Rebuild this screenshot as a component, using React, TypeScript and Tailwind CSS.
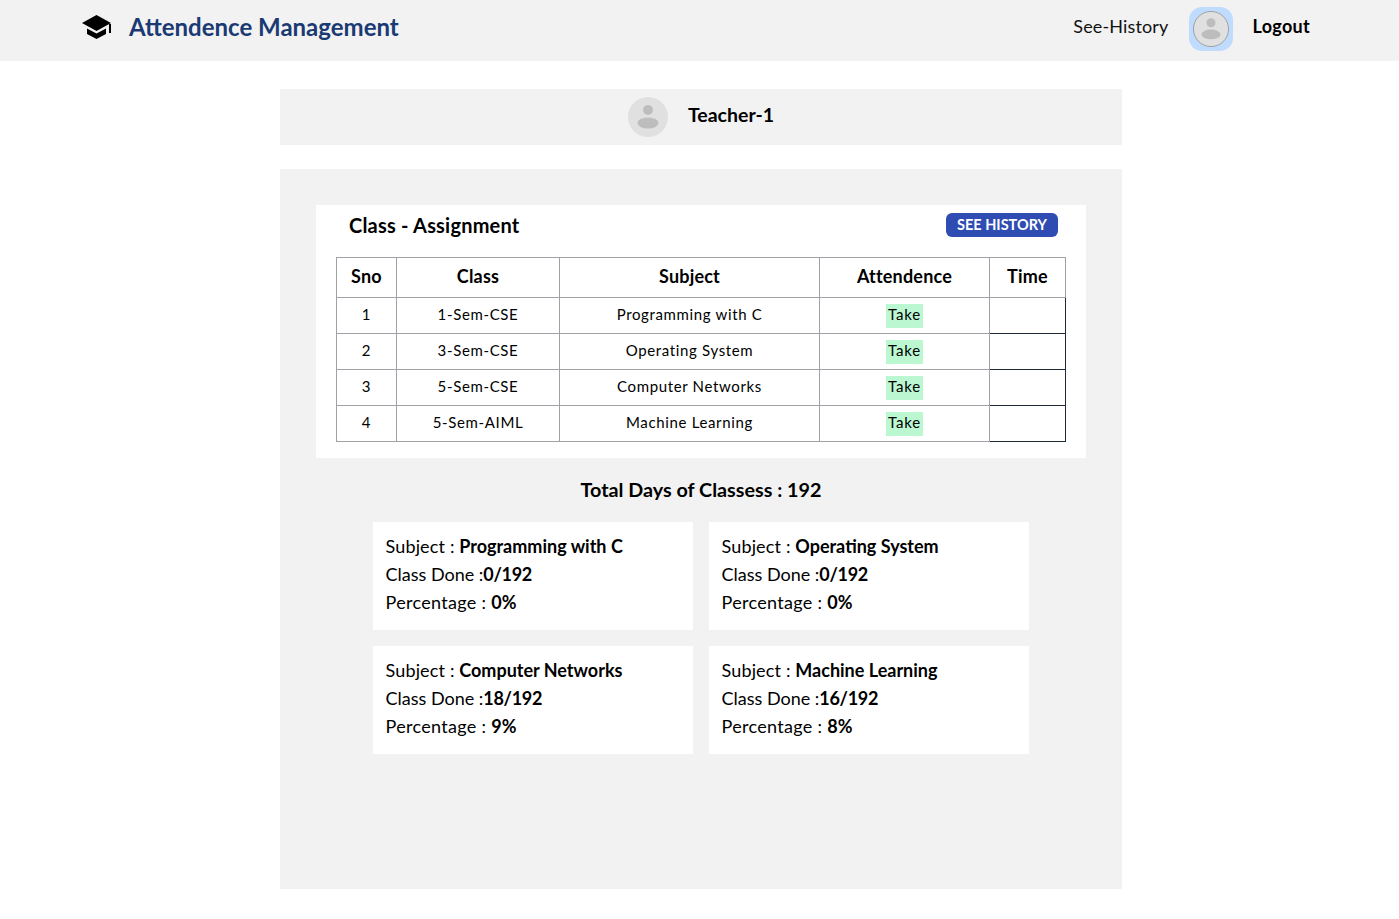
// attendance dashboard for a teacher

import React from "react";

const font = "font-['Lato','Noto_Sans',sans-serif]";

const rows = [
    { sno: 1, cls: "1-Sem-CSE", subject: "Programming with C" },
    { sno: 2, cls: "3-Sem-CSE", subject: "Operating System" },
    { sno: 3, cls: "5-Sem-CSE", subject: "Computer Networks" },
    { sno: 4, cls: "5-Sem-AIML", subject: "Machine Learning" },
];

const stats = [
    { subject: "Programming with C", done: "0/192", pct: "0%" },
    { subject: "Operating System", done: "0/192", pct: "0%" },
    { subject: "Computer Networks", done: "18/192", pct: "9%" },
    { subject: "Machine Learning", done: "16/192", pct: "8%" },
];

const Avatar = ({ size, ring }: { size: number; ring?: boolean }) => (
    <svg width={size} height={size} viewBox="0 0 40 40">
        <circle cx="20" cy="20" r={ring ? 19.5 : 20} fill="#e0e0e0" stroke={ring ? "#9a9a9a" : "none"} />
        <circle cx="20" cy="13" r="5" fill="#bdbdbd" />
        <ellipse cx="20" cy="26" rx="10.5" ry="5.5" fill="#bdbdbd" />
    </svg>
);

const Cap = () => (
    <svg width="30" height="26" viewBox="0 0 30 26" className="mb-[3px]">
        <path d="M14.5 1 L29 9 L14.5 17 L0 9 Z" fill="#000" />
        <path d="M5 14.5 L14.5 19.5 L24 14.5 L24 20 L14.5 25 L5 20 Z" fill="#000" />
        <rect x="27" y="10" width="2" height="9" fill="#000" />
    </svg>
);

const App = () => {
    return (
        <div className={`min-h-[919px] bg-white text-black ${font}`}>
            {/* top navigation */}
            <nav className="h-[61px] bg-[#f2f2f2] flex items-center pb-[4px] pl-[82px] pr-[89px]">
                <Cap />
                <h1 className="ml-[17px] mb-[4px] text-[24px] font-bold tracking-[0px] text-[#1a3a73]">Attendence Management</h1>
                <div className="ml-auto flex items-center">
                    <span className="mb-[4px] text-[18px] tracking-[0.15px] text-[#111]">See-History</span>
                    <div className="ml-[20px] w-[44px] h-[44px] rounded-[13px] bg-[#bfdbfe] flex items-center justify-center">
                        <Avatar size={36} ring />
                    </div>
                    <span className="ml-[20px] mb-[4px] text-[18px] font-bold tracking-[0.3px]">Logout</span>
                </div>
            </nav>

            <div className="w-[842px] ml-[280px] pt-[28px]">
                {/* teacher banner */}
                <div className="h-[56px] bg-[#f2f2f2] flex items-center justify-center gap-[20px]">
                    <Avatar size={40} />
                    <span className="pb-[4px] text-[19.5px] font-bold">Teacher-1</span>
                </div>

                <main className="mt-[24px] h-[720px] bg-[#f2f2f2] p-[36px]">
                    {/* assignment table */}
                    <section className="h-[253px] bg-white px-[20px]">
                        <div className="h-[52px] flex items-start justify-between pl-[13px] pr-[8px]">
                            <h2 className="mt-[5px] text-[20px] font-bold tracking-[0.2px]">Class - Assignment</h2>
                            <button className="mt-[8px] h-[24px] w-[112px] rounded-[6px] bg-[#2f4cb3] text-white text-[14.5px] font-bold">SEE HISTORY</button>
                        </div>
                        <table className="w-[729px] table-fixed border-collapse text-[15px]">
                            <colgroup>
                                <col className="w-[60px]" />
                                <col className="w-[163px]" />
                                <col className="w-[260px]" />
                                <col className="w-[170px]" />
                                <col className="w-[76px]" />
                            </colgroup>
                            <thead>
                                <tr className="h-[40px] text-[18px] font-bold tracking-[0.2px]">
                                    <th className="border border-[#a0a0a6] pb-[2px]">Sno</th>
                                    <th className="border border-[#a0a0a6] pb-[2px]">Class</th>
                                    <th className="border border-[#a0a0a6] pb-[2px]">Subject</th>
                                    <th className="border border-[#a0a0a6] pb-[2px]">Attendence</th>
                                    <th className="border border-[#a0a0a6] pb-[2px]">Time</th>
                                </tr>
                            </thead>
                            <tbody>
                                {rows.map((r) => (
                                    <tr key={r.sno} className="h-[36px] text-center tracking-[0.65px]">
                                        <td className="border border-[#a0a0a6] pb-[2px]">{r.sno}</td>
                                        <td className="border border-[#a0a0a6] pb-[2px]">{r.cls}</td>
                                        <td className="border border-[#a0a0a6] pb-[2px]">{r.subject}</td>
                                        <td className="border border-[#a0a0a6]">
                                            <span className="inline-block w-[37px] h-[24px] leading-[21px] tracking-[0.8px] bg-[#bbf7d0] align-middle">Take</span>
                                        </td>
                                        <td className="border border-[#1f2937]"></td>
                                    </tr>
                                ))}
                            </tbody>
                        </table>
                    </section>

                    <h3 className="mt-[19px] mb-[19px] text-center text-[19.75px] font-bold leading-[26px]">Total Days of Classess : 192</h3>

                    {/* per subject totals */}
                    <div className="w-[656px] mx-auto grid grid-cols-2 gap-[16px]">
                        {stats.map((s) => (
                            <div key={s.subject} className="h-[108px] bg-white pl-[12.5px] pr-[13px] py-[10px] text-[18px] leading-[28px]">
                                <p className="tracking-[0.15px]">Subject : <b className="tracking-normal">{s.subject}</b></p>
                                <p>Class Done :<b className="tracking-[-0.3px]">{s.done}</b></p>
                                <p className="tracking-[0.3px]">Percentage : <b>{s.pct}</b></p>
                            </div>
                        ))}
                    </div>
                </main>
            </div>
        </div>
    );
};

export default App;
